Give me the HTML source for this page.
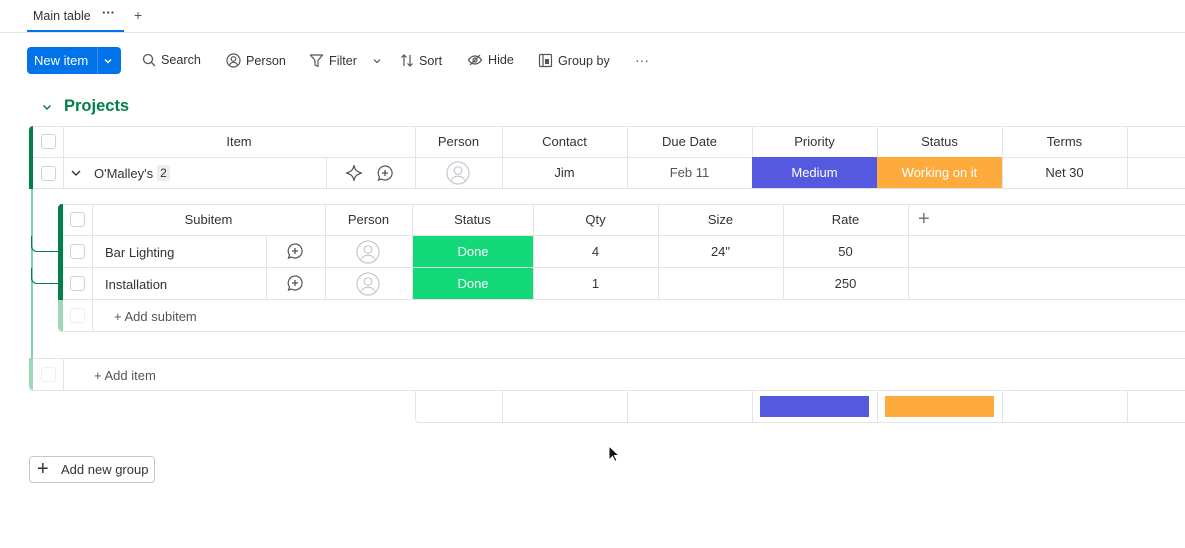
<!DOCTYPE html>
<html><head><meta charset="utf-8"><style>
*{box-sizing:border-box;margin:0;padding:0}
body{width:1185px;height:548px;background:#fff;font-family:"Liberation Sans",sans-serif;color:#323338;position:relative;overflow:hidden;font-size:13px}
.a{position:absolute}
.c{position:absolute;display:flex;align-items:center;justify-content:center;font-size:13px}
.cb{position:absolute;width:15px;height:15px;border:1px solid #d0d2d8;border-radius:3px;background:#fff}
.hl{position:absolute;height:1px;background:#e3e4e8}
.vl{position:absolute;width:1px;background:#e3e4e8}
.tb{position:absolute;top:53px;display:flex;align-items:center;gap:5px;font-size:12.6px;color:#323338}
svg{display:block}
</style></head><body>
<div class="a" style="left:33px;top:9px;font-size:12.5px">Main table</div>
<div class="a" style="left:102px;top:5px;font-size:13px;color:#323338;font-weight:bold">···</div>
<div class="a" style="left:134px;top:7px;font-size:14px;color:#555">+</div>
<div class="a" style="left:0;top:32px;width:1185px;height:1px;background:#e3e4e8"></div>
<div class="a" style="left:27px;top:30px;width:97px;height:2px;background:#0073ea"></div>

<div class="a" style="left:27px;top:47px;width:94px;height:27px;background:#0073ea;border-radius:4px;color:#fff;font-size:13px">
<span class="a" style="left:7px;top:6px">New item</span>
<div class="a" style="left:70px;top:0;width:1px;height:27px;background:#3d8ff0"></div>
<svg class="a" style="left:76px;top:9px" width="10" height="10" viewBox="0 0 10 10"><path d="M2 3.5l3 3 3-3" stroke="#fff" stroke-width="1.5" fill="none"/></svg>
</div>
<div class="tb" style="left:142px"><svg width="14" height="14" viewBox="0 0 14 14"><circle cx="6" cy="6" r="4.5" stroke="#555" stroke-width="1.3" fill="none"/><path d="M9.5 9.5l3.5 3.5" stroke="#555" stroke-width="1.3"/></svg>Search</div>
<div class="tb" style="left:226px"><svg width="15" height="15" viewBox="0 0 15 15"><circle cx="7.5" cy="7.5" r="6.5" stroke="#555" stroke-width="1.2" fill="none"/><circle cx="7.5" cy="6" r="2.3" stroke="#555" stroke-width="1.2" fill="none"/><path d="M3.5 12c1-2 2.5-2.7 4-2.7s3 .7 4 2.7" stroke="#555" stroke-width="1.2" fill="none"/></svg>Person</div>
<div class="tb" style="left:309px"><svg width="15" height="15" viewBox="0 0 15 15"><path d="M1.5 2h12l-4.5 5.5v6l-3-1.5v-4.5z" stroke="#555" stroke-width="1.2" fill="none" stroke-linejoin="round"/></svg>Filter<svg style="margin-left:10px" width="10" height="10" viewBox="0 0 10 10"><path d="M2 3.5l3 3 3-3" stroke="#555" stroke-width="1.2" fill="none"/></svg></div>
<div class="tb" style="left:400px"><svg width="14" height="15" viewBox="0 0 14 15"><path d="M4 13V2M1.5 4.5L4 2l2.5 2.5M10 2v11M7.5 10.5L10 13l2.5-2.5" stroke="#555" stroke-width="1.2" fill="none"/></svg>Sort</div>
<div class="tb" style="left:467px"><svg width="16" height="14" viewBox="0 0 16 14"><path d="M1.5 7c2-3 4-4 6.5-4s4.5 1 6.5 4c-2 3-4 4-6.5 4s-4.5-1-6.5-4z" stroke="#555" stroke-width="1.2" fill="none"/><circle cx="8" cy="7" r="2" stroke="#555" stroke-width="1.2" fill="none"/><path d="M3 12L13 2" stroke="#555" stroke-width="1.2"/></svg>Hide</div>
<div class="tb" style="left:538px"><svg width="15" height="15" viewBox="0 0 15 15"><rect x="1.5" y="1.5" width="12" height="12" rx="1" stroke="#555" stroke-width="1.2" fill="none"/><rect x="7" y="6" width="4" height="5" fill="#555"/><path d="M5 1.5v12" stroke="#555" stroke-width="1.2"/></svg>Group by</div>
<div class="a" style="left:635px;top:52px;font-size:14px;color:#555">···</div>

<svg class="a" style="left:41px;top:101px" width="12" height="12" viewBox="0 0 12 12"><path d="M2.5 4.5l3.5 3.5 3.5-3.5" stroke="#037f4c" stroke-width="1.5" fill="none"/></svg>
<div class="a" style="left:64px;top:97px;font-size:16.5px;font-weight:bold;color:#037f4c">Projects</div>

<div class="a" style="left:29px;top:126px;width:4px;height:63px;background:#037f4c;border-radius:4px 0 0 0"></div>
<div class="hl" style="left:33px;top:126px;width:1152px"></div>
<div class="hl" style="left:33px;top:157px;width:1152px"></div>
<div class="hl" style="left:33px;top:188px;width:1152px"></div>
<div class="vl" style="left:63px;top:126px;height:63px"></div>
<div class="vl" style="left:326px;top:157px;height:32px"></div>
<div class="vl" style="left:415px;top:126px;height:63px"></div>
<div class="vl" style="left:502px;top:126px;height:63px"></div>
<div class="vl" style="left:627px;top:126px;height:63px"></div>
<div class="vl" style="left:752px;top:126px;height:63px"></div>
<div class="vl" style="left:877px;top:126px;height:63px"></div>
<div class="vl" style="left:1002px;top:126px;height:63px"></div>
<div class="vl" style="left:1127px;top:126px;height:63px"></div>
<div class="cb" style="left:41px;top:134px"></div>
<div class="cb" style="left:41px;top:166px"></div>
<div class="c" style="left:63px;top:126px;width:352px;height:31px">Item</div>
<div class="c" style="left:415px;top:126px;width:87px;height:31px">Person</div>
<div class="c" style="left:502px;top:126px;width:125px;height:31px">Contact</div>
<div class="c" style="left:627px;top:126px;width:125px;height:31px">Due Date</div>
<div class="c" style="left:752px;top:126px;width:125px;height:31px">Priority</div>
<div class="c" style="left:877px;top:126px;width:125px;height:31px">Status</div>
<div class="c" style="left:1002px;top:126px;width:125px;height:31px">Terms</div>
<svg class="a" style="left:70px;top:167px" width="12" height="12" viewBox="0 0 12 12"><path d="M2 4l4 4 4-4" stroke="#323338" stroke-width="1.4" fill="none"/></svg>
<div class="a" style="left:94px;top:166px">O'Malley's</div>
<div class="a" style="left:157px;top:165px;width:13px;height:16px;background:#eceef2;border-radius:2px;font-size:12px;text-align:center;line-height:16px">2</div>
<svg class="a" style="left:345px;top:164px" width="18" height="18" viewBox="0 0 18 18"><path d="M9 1.5c.7 4 2.5 6 7.5 7.5-5 1.5-6.8 3.5-7.5 7.5-.7-4-2.5-6-7.5-7.5 5-1.5 6.8-3.5 7.5-7.5z" stroke="#555" stroke-width="1.2" fill="none" stroke-linejoin="round"/></svg>
<svg class="a" style="left:376px;top:164px" width="18" height="18" viewBox="0 0 18 18"><path d="M9 2a7 7 0 1 1-3.5 13L2.5 16l1-3A7 7 0 0 1 9 2z" stroke="#555" stroke-width="1.2" fill="none"/><path d="M9 6v6M6 9h6" stroke="#555" stroke-width="1.3"/></svg>
<svg class="a" style="left:446px;top:161px" width="24" height="24" viewBox="0 0 24 24"><circle cx="12" cy="12" r="11" stroke="#c5c7d0" stroke-width="1.2" fill="none"/><circle cx="12" cy="9.5" r="3.8" stroke="#c5c7d0" stroke-width="1.2" fill="none"/><path d="M5 19.5c1.5-3 4-4.3 7-4.3s5.5 1.3 7 4.3" stroke="#c5c7d0" stroke-width="1.2" fill="none"/></svg>
<div class="c" style="left:502px;top:157px;width:125px;height:31px">Jim</div>
<div class="c" style="left:627px;top:157px;width:125px;height:31px;color:#555">Feb 11</div>
<div class="c" style="left:752px;top:157px;width:125px;height:31px;background:#5559df;color:#fff">Medium</div>
<div class="c" style="left:877px;top:157px;width:125px;height:31px;background:#fdab3d;color:#fff">Working on it</div>
<div class="c" style="left:1002px;top:157px;width:125px;height:31px">Net 30</div>

<div class="a" style="left:31px;top:189px;width:2px;height:170px;background:#7fd3a7"></div>
<div class="a" style="left:31px;top:236px;width:27px;height:16px;border-left:1px solid #037f4c;border-bottom:1px solid #037f4c;border-radius:0 0 0 6px"></div>
<div class="a" style="left:31px;top:268px;width:27px;height:16px;border-left:1px solid #037f4c;border-bottom:1px solid #037f4c;border-radius:0 0 0 6px"></div>

<div class="a" style="left:58px;top:204px;width:5px;height:96px;background:#037f4c;border-radius:4px 0 0 0"></div>
<div class="a" style="left:58px;top:300px;width:5px;height:31px;background:#9fd8b9;border-radius:0 0 0 4px"></div>
<div class="hl" style="left:63px;top:204px;width:1122px"></div>
<div class="hl" style="left:63px;top:235px;width:1122px"></div>
<div class="hl" style="left:63px;top:267px;width:1122px"></div>
<div class="hl" style="left:63px;top:299px;width:1122px"></div>
<div class="hl" style="left:58px;top:331px;width:1127px"></div>
<div class="vl" style="left:92px;top:204px;height:127px"></div>
<div class="vl" style="left:266px;top:236px;height:64px"></div>
<div class="vl" style="left:325px;top:204px;height:96px"></div>
<div class="vl" style="left:412px;top:204px;height:96px"></div>
<div class="vl" style="left:533px;top:204px;height:96px"></div>
<div class="vl" style="left:658px;top:204px;height:96px"></div>
<div class="vl" style="left:783px;top:204px;height:96px"></div>
<div class="vl" style="left:908px;top:204px;height:96px"></div>
<div class="cb" style="left:70px;top:212px"></div>
<div class="cb" style="left:70px;top:244px"></div>
<div class="cb" style="left:70px;top:276px"></div>
<div class="cb" style="left:70px;top:308px;border-color:#eceef0"></div>
<div class="c" style="left:92px;top:204px;width:233px;height:31px">Subitem</div>
<div class="c" style="left:325px;top:204px;width:87px;height:31px">Person</div>
<div class="c" style="left:412px;top:204px;width:121px;height:31px">Status</div>
<div class="c" style="left:533px;top:204px;width:125px;height:31px">Qty</div>
<div class="c" style="left:658px;top:204px;width:125px;height:31px">Size</div>
<div class="c" style="left:783px;top:204px;width:125px;height:31px">Rate</div>
<div class="a" style="left:918px;top:208px;font-size:20px;color:#777;font-weight:300">+</div>
<div class="a" style="left:105px;top:245px">Bar Lighting</div>
<div class="a" style="left:105px;top:277px">Installation</div>
<svg class="a" style="left:286px;top:242px" width="18" height="18" viewBox="0 0 18 18"><path d="M9 2a7 7 0 1 1-3.5 13L2.5 16l1-3A7 7 0 0 1 9 2z" stroke="#555" stroke-width="1.2" fill="none"/><path d="M9 6v6M6 9h6" stroke="#555" stroke-width="1.3"/></svg>
<svg class="a" style="left:286px;top:274px" width="18" height="18" viewBox="0 0 18 18"><path d="M9 2a7 7 0 1 1-3.5 13L2.5 16l1-3A7 7 0 0 1 9 2z" stroke="#555" stroke-width="1.2" fill="none"/><path d="M9 6v6M6 9h6" stroke="#555" stroke-width="1.3"/></svg>
<svg class="a" style="left:356px;top:240px" width="24" height="24" viewBox="0 0 24 24"><circle cx="12" cy="12" r="11" stroke="#c5c7d0" stroke-width="1.2" fill="none"/><circle cx="12" cy="9.5" r="3.8" stroke="#c5c7d0" stroke-width="1.2" fill="none"/><path d="M5 19.5c1.5-3 4-4.3 7-4.3s5.5 1.3 7 4.3" stroke="#c5c7d0" stroke-width="1.2" fill="none"/></svg>
<svg class="a" style="left:356px;top:272px" width="24" height="24" viewBox="0 0 24 24"><circle cx="12" cy="12" r="11" stroke="#c5c7d0" stroke-width="1.2" fill="none"/><circle cx="12" cy="9.5" r="3.8" stroke="#c5c7d0" stroke-width="1.2" fill="none"/><path d="M5 19.5c1.5-3 4-4.3 7-4.3s5.5 1.3 7 4.3" stroke="#c5c7d0" stroke-width="1.2" fill="none"/></svg>
<div class="c" style="left:413px;top:236px;width:120px;height:31px;background:#12d878;color:#fff">Done</div>
<div class="c" style="left:413px;top:268px;width:120px;height:31px;background:#12d878;color:#fff">Done</div>
<div class="c" style="left:533px;top:236px;width:125px;height:31px">4</div>
<div class="c" style="left:533px;top:268px;width:125px;height:31px">1</div>
<div class="c" style="left:658px;top:236px;width:125px;height:31px">24"</div>
<div class="c" style="left:783px;top:236px;width:125px;height:31px">50</div>
<div class="c" style="left:783px;top:268px;width:125px;height:31px">250</div>
<div class="a" style="left:114px;top:309px;color:#555">+ Add subitem</div>

<div class="a" style="left:29px;top:358px;width:4px;height:32px;background:#9fd8b9;border-radius:0 0 0 4px"></div>
<div class="hl" style="left:33px;top:358px;width:1152px"></div>
<div class="hl" style="left:29px;top:390px;width:1156px"></div>
<div class="vl" style="left:63px;top:358px;height:32px"></div>
<div class="cb" style="left:41px;top:367px;border-color:#eceef0"></div>
<div class="a" style="left:94px;top:368px;color:#555">+ Add item</div>

<div class="a" style="left:415px;top:390px;width:800px;height:33px;border-left:1px solid #e3e4e8;border-bottom:1px solid #e3e4e8;border-radius:0 0 0 4px"></div>
<div class="vl" style="left:502px;top:390px;height:32px"></div>
<div class="vl" style="left:627px;top:390px;height:32px"></div>
<div class="vl" style="left:752px;top:390px;height:32px"></div>
<div class="vl" style="left:877px;top:390px;height:32px"></div>
<div class="vl" style="left:1002px;top:390px;height:32px"></div>
<div class="vl" style="left:1127px;top:390px;height:32px"></div>
<div class="a" style="left:760px;top:396px;width:109px;height:21px;background:#5559df"></div>
<div class="a" style="left:885px;top:396px;width:109px;height:21px;background:#fdab3d"></div>

<svg class="a" style="left:608px;top:445px" width="12" height="18" viewBox="0 0 12 18"><path d="M1 1v14l3.5-3.5 2.5 5 2-1-2.5-5H11z" fill="#111" stroke="#fff" stroke-width="1"/></svg>

<div class="a" style="left:29px;top:456px;width:126px;height:27px;border:1px solid #c5c7d0;border-radius:4px"></div>
<div class="a" style="left:37px;top:458px;font-size:20px;color:#323338;font-weight:300">+</div>
<div class="a" style="left:61px;top:462px">Add new group</div>
</body></html>
